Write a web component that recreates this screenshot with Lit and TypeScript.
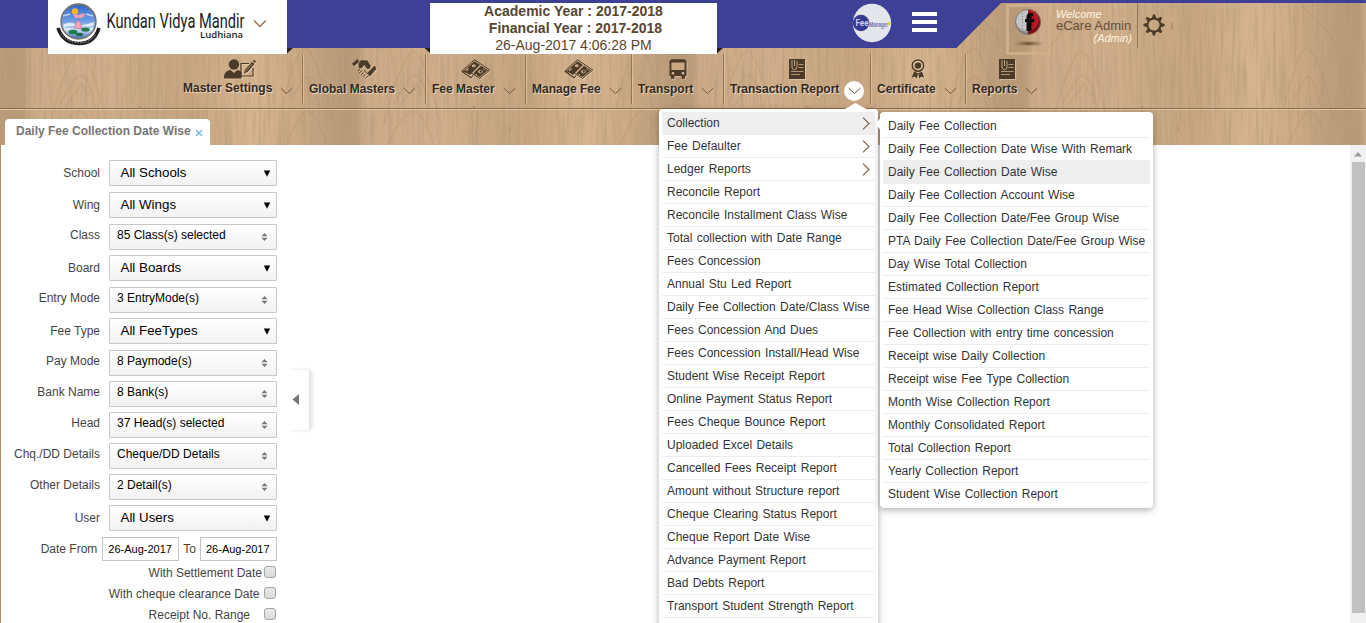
import { LitElement, html, css, svg, nothing } from "lit";
import { customElement, property } from "lit/decorators.js";
import { classMap } from "lit/directives/class-map.js";

const ink = "#4b3a28";

const icons: Record<string, unknown> = {
  user: svg`<svg width="32" height="20" viewBox="0 0 32 20">
    <circle cx="10" cy="5.5" r="5.2" fill=${ink}/>
    <path d="M0 19.5 C0 13 3 11.5 6.5 11 L10 14 L13.5 11 C16 11.5 17 12.5 17.5 14 V19.5Z" fill=${ink}/>
    <path d="M25 4.5H17V17H29V9" fill="none" stroke=${ink} stroke-width="1.2"/>
    <path d="M20 14.5 L21 11 L28 3 L30.5 5 L23.5 13Z M28.8 2 L30 0.8 L32 2.5 L31 4Z" fill=${ink}/>
    <path d="M21.5 12.5L28 5" stroke="#c9a681" stroke-width=".7"/></svg>`,
  hands: svg`<svg width="24" height="20" viewBox="0 0 24 20">
    <path d="M0 4.8 L5.4 0 L7.4 2.4 L2 7.2Z" fill=${ink}/>
    <path d="M6.5 4.5 L9 1.2 L15.5 1.4 L18.8 7 L17.4 10 L15 9.8 L12.3 6 L9.5 9.2 L7 9Z" fill=${ink}/>
    <path d="M6 12L8 10.300M7.200 14L9.800 11.800M9 16L11.500 13.500M11 17.600L13.200 15.500" stroke=${ink} stroke-width="1"/>
    <path d="M12 11 L16 15.2 L18 13.2" fill="none" stroke=${ink} stroke-width=".9"/>
    <path d="M16 13.800 L22.600 7 L24 10 L17.800 17Z M13 19.500L16.800 16.500" fill=${ink} stroke=${ink} stroke-width=".8"/></svg>`,
  money: svg`<svg width="30" height="20" viewBox="0 0 30 20">
    <path d="M.8 12.200 L13.500 .8 L28.800 11 L18.500 19.300 L10.800 14.500 Z" fill="none" stroke=${ink} stroke-width="1"/>
    <path d="M1 12.500 L10 18.800 L12 16.500" fill="none" stroke=${ink} stroke-width="1.100"/>
    <path d="M2.600 12 L13.500 2.300 L19 6 L9 16Z" fill=${ink}/>
    <path d="M12.200 14.500 L20 6.800 L27 11.200 L18.600 18Z" fill=${ink}/>
    <ellipse cx="12.800" cy="6.800" rx="2" ry="1.500" fill="#c9a681"/><path d="M5 11.800L7.500 9.600" stroke="#c9a681" stroke-width="1.300"/>
    <ellipse cx="19.500" cy="12.600" rx="2.500" ry="1.900" fill="#c9a681"/><ellipse cx="19.900" cy="12.500" rx="1.100" ry="1.200" fill=${ink}/>
    <path d="M14.800 14.800L16 16M22.500 9.800L24.500 11.200" stroke="#c9a681" stroke-width=".9"/></svg>`,
  bus: svg`<svg width="18" height="20" viewBox="0 0 18 20">
    <path d="M2.500 .2H15.500L17.500 2V17H.5V2Z" fill=${ink}/>
    <rect x="2.400" y="3.500" width="13.200" height="7.500" fill="#c9a681"/>
    <circle cx="4" cy="14.200" r="1.300" fill="#d9bd9b"/><circle cx="14" cy="14.200" r="1.300" fill="#d9bd9b"/>
    <path d="M2 17h3.400v2.800H2zM12.600 17H16v2.800h-3.400z" fill=${ink}/></svg>`,
  report: svg`<svg width="16" height="20" viewBox="0 0 16 20">
    <rect width="16" height="20" fill=${ink}/>
    <path d="M3 1V8A2.300 2.500 0 0 0 8 8V2M5.500 1V7" fill="none" stroke="#c0a07c" stroke-width="1"/>
    <path d="M9.500 5.500h5M9.500 8.500h5M2 12.500h12.500M2 15.500h9" stroke="#c0a07c" stroke-width=".9"/></svg>`,
  medal: svg`<svg width="14" height="20" viewBox="0 0 14 20">
    <circle cx="7" cy="6.600" r="5.700" fill="none" stroke=${ink} stroke-width="1.500"/><circle cx="7" cy="6.600" r="3.200" fill=${ink}/>
    <path d="M3 12.800 L7 14 L6 19.600 L3.800 17.800 L.8 18.500Z M11 12.800 L7.200 14 L8.200 19.600 L10.200 17.800 L13.200 18.500Z" fill=${ink}/></svg>`,
};

const chevronDown = html`<svg class="chev" width="13" height="8" viewBox="0 0 13 8"><path d="M.7 1L6.500 6.600L12.300 1" fill="none" stroke="#75593b" stroke-width="1"/></svg>`;

interface NavItem { label: string; icon: string; width: number; active?: boolean }
const nav: NavItem[] = [
  { label: "Master Settings", icon: "user", width: 126 },
  { label: "Global Masters", icon: "hands", width: 123 },
  { label: "Fee Master", icon: "money", width: 100 },
  { label: "Manage Fee", icon: "money", width: 106 },
  { label: "Transport", icon: "bus", width: 92 },
  { label: "Transaction Report", icon: "report", width: 147, active: true },
  { label: "Certificate", icon: "medal", width: 95 },
  { label: "Reports", icon: "report", width: 82 },
];

const reports = [
  "Collection", "Fee Defaulter", "Ledger Reports", "Reconcile Report", "Reconcile Installment Class Wise",
  "Total collection with Date Range", "Fees Concession", "Annual Stu Led Report", "Daily Fee Collection Date/Class Wise",
  "Fees Concession And Dues", "Fees Concession Install/Head Wise", "Student Wise Receipt Report",
  "Online Payment Status Report", "Fees Cheque Bounce Report", "Uploaded Excel Details", "Cancelled Fees Receipt Report",
  "Amount without Structure report", "Cheque Clearing Status Report", "Cheque Report Date Wise",
  "Advance Payment Report", "Bad Debts Report", "Transport Student Strength Report", "",
];
const collections = [
  "Daily Fee Collection", "Daily Fee Collection Date Wise With Remark", "Daily Fee Collection Date Wise",
  "Daily Fee Collection Account Wise", "Daily Fee Collection Date/Fee Group Wise", "PTA Daily Fee Collection Date/Fee Group Wise",
  "Day Wise Total Collection", "Estimated Collection Report", "Fee Head Wise Collection Class Range",
  "Fee Collection with entry time concession", "Receipt wise Daily Collection", "Receipt wise Fee Type Collection",
  "Month Wise Collection Report", "Monthly Consolidated Report", "Total Collection Report", "Yearly Collection Report",
  "Student Wise Collection Report",
];

type Field = [label: string, value: string, multi: boolean];
const fields: Field[] = [
  ["School", "All Schools", false], ["Wing", "All Wings", false], ["Class", "85 Class(s) selected", true],
  ["Board", "All Boards", false], ["Entry Mode", "3 EntryMode(s)", true], ["Fee Type", "All FeeTypes", false],
  ["Pay Mode", "8 Paymode(s)", true], ["Bank Name", "8 Bank(s)", true], ["Head", "37 Head(s) selected", true],
  ["Chq./DD Details", "Cheque/DD Details", true], ["Other Details", "2 Detail(s)", true], ["User", "All Users", false],
];

@customElement("wood-panel")
class WoodPanel extends LitElement {
  static styles = css`:host{display:block;width:100%;height:100%}svg{display:block}`;
  render() {
    return html`<svg width="1366" height="145">
      <defs>
        <linearGradient id="tone">
          <stop offset="0" stop-color="#b99a78"/><stop offset=".035" stop-color="#bb9c7a"/>
          <stop offset=".06" stop-color="#cdab88"/><stop offset=".3" stop-color="#d0ae8b"/>
          <stop offset=".42" stop-color="#c9a884"/><stop offset=".55" stop-color="#c8a682"/>
          <stop offset=".62" stop-color="#cfad89"/><stop offset=".72" stop-color="#d6b490"/>
          <stop offset=".86" stop-color="#cba985"/><stop offset=".94" stop-color="#bf9f7d"/>
          <stop offset="1" stop-color="#b99a78"/>
        </linearGradient>
        <pattern id="plank" x="12" width="334" height="145" patternUnits="userSpaceOnUse">
          <rect width="334" height="145" fill="url(#tone)"/>
          <g fill="none" stroke="#9b7852" stroke-opacity=".17" stroke-width="1.600">
            <path d="M38 124C46 92 58 55 66 52S86 82 94 124"/><path d="M48 104C57 88 65 72 71 76S80 92 83 108"/>
            <path d="M54 106L70 84L77 96"/><path d="M42 145C52 120 64 108 70 112S84 130 88 145"/>
            <path d="M270 108C278 70 288 46 294 48S310 76 320 120"/><path d="M280 100C286 86 293 72 297 78S303 92 307 106"/>
            <path d="M274 145C284 124 292 106 298 112S310 128 315 145"/><path d="M68 0C62 22 44 30 34 52M284 0C300 20 314 26 322 46"/>
          </g>
          <g fill="#8a6a48" fill-opacity=".35"><ellipse cx="128" cy="107" rx="1.600" ry="1"/><ellipse cx="158" cy="26" rx="1" ry="4"/><ellipse cx="164" cy="129" rx=".8" ry="3"/></g>
        </pattern>
        <filter id="grain" x="0" y="0" width="100%" height="100%">
          <feTurbulence type="fractalNoise" baseFrequency=".34 .018" numOctaves="3" seed="7"/>
          <feColorMatrix values="0 0 0 0 .42  0 0 0 0 .3  0 0 0 0 .17  1.200 0 0 0 -.5"/>
        </filter>
      </defs>
      <rect width="1366" height="145" fill="url(#plank)"/>
      <rect width="1366" height="145" filter="url(#grain)"/>
    </svg>`;
  }
}

@customElement("drop-menu")
class DropMenu extends LitElement {
  @property({ type: Array }) items: string[] = [];
  @property({ type: Number }) selected = 0;
  @property({ type: Number }) nested = 0;
  static styles = css`
    :host{display:block;box-sizing:border-box;background:#fff;padding:3px 3px 2px;border-radius:4px;box-shadow:0 2px 7px rgba(0,0,0,.32)}
    .item{height:23px;box-sizing:border-box;border-bottom:1px solid #ededed;padding:0 5px;display:flex;align-items:center;justify-content:space-between;
      font:12px/22px "Liberation Sans",Arial,sans-serif;word-spacing:1px;color:#333;white-space:nowrap}
    .item.on{background:#eee}
    .item:last-child{border-bottom-color:transparent}`;
  render() {
    return this.items.map((t, i) => html`<div class=${classMap({ item: true, on: i === this.selected })}><span>${t}</span>
      ${i < this.nested ? html`<svg width="8" height="13" viewBox="0 0 8 13"><path d="M1 .6L7 6.500L1 12.400" fill="none" stroke="#7b5f42" stroke-width="1.100"/></svg>` : nothing}</div>`);
  }
}

@customElement("app-root")
class AppRoot extends LitElement {
  static styles = css`
    :host{display:block;position:relative;width:1366px;height:623px;overflow:hidden;background:#fff;font:12px "Liberation Sans",Arial,sans-serif;color:#444}
    svg{display:block}
    .head{position:relative;height:145px}
    .wood{position:absolute;inset:0}
    .violet{position:absolute;left:0;top:0}
    .front{position:relative;display:flex;flex-direction:column;height:145px}
    .top{display:flex;height:54px;align-items:flex-start}
    .brand{margin-left:48px;width:239px;height:54px;background:#fff;display:flex}
    .brand svg{overflow:visible}
    .years{margin:3px 0 0 143px;width:287px;height:51px;background:#fff;color:#58462f;text-align:center;font-size:14px;line-height:17px}
    .years b{display:block}
    .years b + b{padding-left:4px}
    .fee{margin:3px 0 0 135px}
    .burger{margin:12px 0 0 20px;width:25px;height:20px;display:flex;flex-direction:column;justify-content:space-between}
    .burger i{height:4px;background:#fff}
    .avatar{margin:4px 0 0 69px;width:45px;height:51px}
    .who{margin:9px 0 0 5px;width:76px;line-height:12px;display:flex;flex-direction:column}
    .who em{font-size:11px;color:#fff4e2;line-height:11px}
    .who em:last-child{align-self:flex-end}
    .who span{font-size:13px;line-height:12px;color:#63503b;margin-bottom:1px;white-space:nowrap}
    .bar{width:1px;height:45px;margin:3px 0 0 5px;background:#957654}
    .gear{margin:14px 0 0 5px}
    .nav{display:flex;height:54px;padding-left:176px}
    .entry{box-sizing:border-box;height:50px;display:flex;flex-direction:column;border-left:1px solid #957654;box-shadow:inset 1px 0 #dcbd98;padding-left:6px}
    .entry:first-child{border-color:transparent;box-shadow:none}
    .ico{height:20px;margin:5px 0 2px -6px;display:flex;justify-content:center;filter:drop-shadow(1px 1px 0 rgba(255,240,215,.35))}
    .cap{display:flex;align-items:center;height:16px;font-weight:bold;color:#33291f;text-shadow:1px 1px 1px #f0dcc0;white-space:nowrap}
    .entry:first-child .cap span{position:relative;top:-1px}
    .chevbox{display:flex;margin:3px 0 0 8px}
    .active .chevbox{margin:4px 0 0 5px;width:20px;height:20px;border-radius:50%;background:#fff;align-items:center;justify-content:center;flex:none}
    .rule{height:1px;background:#8c7052;border-bottom:1px solid #e0c29e}
    .tab{margin:9px 0 0 5px;width:205px;height:26px;box-sizing:border-box;border-radius:4px 4px 0 0;background:#fff;display:flex;align-items:center;padding:0 0 2px 11px;font-weight:bold;color:#757575;gap:4px;white-space:nowrap}
    .tab svg{margin-top:3px}
    .body{display:flex;height:478px;border-left:1px solid #b08d66;box-sizing:border-box}
    .side{width:276px;padding-top:15px;box-sizing:border-box;flex:none}
    .row{display:flex;height:32px;justify-content:flex-end;align-items:flex-start;gap:9px;line-height:26px}
    .row.multi{height:31px;line-height:22px}
    .box{width:168px;height:26px;box-sizing:border-box;border:1px solid #c8c8c8;border-radius:1px;background:linear-gradient(#fff,#f2f2f2);
      display:flex;justify-content:space-between;align-items:center;padding:0 5px 0 10.500px;font-size:13.333px;line-height:24px;color:#000}
    .multi .box{padding:0 8px 0 7px;font-size:12px;line-height:20px;align-items:flex-start}
    .multi .box svg{margin-top:8px}
    .dates{display:flex;justify-content:flex-end;line-height:24px;height:26px}
    .date{width:77px;height:24px;box-sizing:border-box;border:1px solid #c4c4c4;background:#fff;font-size:11px;line-height:23px;padding-left:5px;color:#000;white-space:nowrap}
    .date.a{margin:0 4px 0 5px}.date.b{margin-left:4px}
    .check{display:flex;justify-content:flex-end;height:21px;line-height:20px}
    .check i{width:12px;height:12px;box-sizing:border-box;border:1px solid #a5a5a5;border-radius:3px;background:linear-gradient(#e9e9e9,#dadada);margin:3px 1px 0 2px}
    .check.mid i{margin-left:4.500px}.check.far i{margin-left:14px}
    .handle{margin:225px 0 0 11px;width:21px;height:60px;background:#fff;box-shadow:3px 0 4px rgba(0,0,0,.13);display:flex;align-items:center;padding:0 0 2px 4px;box-sizing:border-box}
    .scroll{margin-left:auto;width:16px;height:478px;background:#f1f1f1;display:flex;flex-direction:column;align-items:center}
    .scroll svg{margin:7px 0 5px}
    .thumb{width:13px;height:451px;background:#c1c1c1}
    .menu1{position:absolute;left:659px;top:109px;width:219px}
    .menu2{position:absolute;left:880px;top:112px;width:273px}
    .tip1{position:absolute;left:843px;top:102px}
    .tip2{position:absolute;left:875px;top:117px}
    text{font-family:"Liberation Sans Narrow","Roboto",sans-serif}
    .lud{font-family:"Open Sans",sans-serif;font-weight:600}`;

  brand() {
    return html`<svg width="239" height="54">
      <defs><linearGradient id="sky" x2="0" y2="1"><stop offset="0" stop-color="#2f63c9"/><stop offset=".5" stop-color="#6fa0e6"/><stop offset=".75" stop-color="#c8dcf6"/><stop offset="1" stop-color="#3b62b4"/></linearGradient></defs>
      <circle cx="30.500" cy="21.500" r="17.400" fill="url(#sky)" stroke="#77736f" stroke-width="1.600"/>
      <path d="M15 25q6-4 12-1t19-2l-1 4q-12 1-17 0t-12 1z" fill="#fff" opacity=".75"/><path d="M15 16l7-2M38 14l7 2M37 29h8M16 29h7" stroke="#fff" opacity=".65" stroke-width="1.500"/>
      <circle cx="27" cy="11.500" r="3.200" fill="#f2b52b"/>
      <path d="M25 14l5 1 6-2 1 3-4 2h-6z" fill="#ef9cb9"/><path d="M31.300 18q-3 5-2 9" fill="none" stroke="#cf5d7f"/>
      <path d="M26.500 28q0-5 4-8 4 4 3 9z" fill="#f3a5b8" stroke="#c65379" stroke-width=".5"/>
      <ellipse cx="25" cy="32" rx="4.500" ry="2.300" fill="#1c7c4c"/><ellipse cx="37.500" cy="29.600" rx="4.200" ry="2.200" fill="#1c7c4c"/><ellipse cx="31.500" cy="34.400" rx="3.500" ry="1.600" fill="#18693f"/>
      <path d="M10 28q5 15 20.500 15.500T51 28" fill="none" stroke="#23201e" stroke-width="3.600"/>
      <path d="M13 34q6 8 17.500 8.800T48 34" fill="none" stroke="#bdb9b3" stroke-width=".8" stroke-dasharray="1.500 1.200"/>
      <text x="58.500" y="27.500" font-size="20.500" fill="#1c1c1c" textLength="138" lengthAdjust="spacingAndGlyphs">Kundan Vidya Mandir</text>
      <text class="lud" x="152" y="38" font-size="9.500" fill="#1c1c1c" textLength="43">Ludhiana</text>
      <path d="M206 20.500L211.800 26.500L217.800 20.500" fill="none" stroke="#94704a" stroke-width="1.300"/>
    </svg>`;
  }

  render() {
    return html`
      <div class="head">
        <div class="wood"><wood-panel></wood-panel></div>
        <svg class="violet" width="1366" height="54">
          <path d="M0 0H1366V3H1001L956.500 48H0Z" fill="#3e4095"/>
          <path d="M287 48h6l-6 5.500zM424.500 48h6v5.500zM717 48h6l-6 5.500z" fill="#2b241d"/>
        </svg>
        <div class="front">
          <div class="top">
            <div class="brand">${this.brand()}</div>
            <div class="years"><b>Academic Year : 2017-2018</b><b>Financial Year : 2017-2018</b>26-Aug-2017 4:06:28 PM</div>
            <svg class="fee" width="40" height="40">
              <circle cx="20" cy="20" r="19.200" fill="#e3e6ea"/><circle cx="9" cy="20" r="8.200" fill="#373a91"/>
              <text x="3.500" y="23" font-size="9" font-weight="bold" fill="#cfd2ea" textLength="13" lengthAdjust="spacingAndGlyphs">Fee</text>
              <text x="17" y="23.500" font-size="7.500" font-weight="bold" fill="#7376b0" textLength="19" lengthAdjust="spacingAndGlyphs">Manager</text>
              <circle cx="37" cy="20.500" r="1.500" fill="#e9c33c"/>
            </svg>
            <div class="burger"><i></i><i></i><i></i></div>
            <svg class="avatar" width="45" height="51">
              <defs><radialGradient id="ball" cx=".45" cy=".4"><stop offset=".7" stop-color="#fff" stop-opacity="0"/><stop offset="1" stop-color="#000" stop-opacity=".3"/></radialGradient>
              <radialGradient id="shade"><stop offset="0" stop-color="#5c452d"/><stop offset="1" stop-color="#8a6a48" stop-opacity="0"/></radialGradient></defs>
              <rect x="1.500" y="1.500" width="42" height="48" fill="none" stroke="#cfae88" stroke-width="3"/>
              <ellipse cx="22.500" cy="39.500" rx="16" ry="3" fill="url(#shade)"/>
              <path d="M22 5.300A12.500 12.500 0 0 0 22 30.500Z" fill="#c4c4c4"/><path d="M22 5.300A12.500 12.500 0 0 1 22 30.500Z" fill="#b3101e"/>
              <circle cx="22" cy="18" r="12.500" fill="url(#ball)" stroke="#7d6c5c" stroke-width=".8"/>
              <path d="M16.500 9v18" stroke="#777" stroke-dasharray="1 2"/>
              <path d="M20.500 27V18H19v-3h1.500v-2q0-4 4-4H27v3h-1.500v3H28v3h-2.500v9z" fill="#0c0c0c"/>
            </svg>
            <div class="who"><em>Welcome</em><span>eCare Admin</span><em>(Admin)</em></div>
            <div class="bar"></div>
            <svg class="gear" width="22" height="22" viewBox="-11 -11 22 22">
              <circle r="6.500" fill="none" stroke="#4b3a28" stroke-width="1.900"/>
              ${[0, 45, 90, 135, 180, 225, 270, 315].map((a) => svg`<path d="M-2.200 -6.800L-1 -10.600H1L2.200 -6.800Z" fill="#4b3a28" transform=${`rotate(${a})`}/>`)}
            </svg>
          </div>
          <div class="nav">${nav.map((n) => html`
            <div class=${classMap({ entry: true, active: !!n.active })} style="width:${n.width}px">
              <div class="ico">${icons[n.icon]}</div>
              <div class="cap"><span>${n.label}</span><div class="chevbox">${chevronDown}</div></div>
            </div>`)}</div>
          <div class="rule"></div>
          <div class="tab">Daily Fee Collection Date Wise
            <svg width="8" height="8" viewBox="0 0 8 8"><path d="M1 1L7 7M7 1L1 7" stroke="#6cb6e8" stroke-width="1.300"/></svg>
          </div>
        </div>
      </div>
      <div class="body">
        <div class="side">
          ${fields.map(([l, v, m]) => html`<div class=${classMap({ row: true, multi: m })}><span>${l}</span><div class="box"><span>${v}</span>
            ${m ? html`<svg width="7" height="8" viewBox="0 0 7 8"><path d="M3.500 0L6.500 3.200H.5ZM3.500 8L6.500 4.800H.5Z" fill="#777"/></svg>`
              : html`<svg width="8" height="7" viewBox="0 0 8 7"><path d="M.8 .5H7.200L4 6.800Z" fill="#000"/></svg>`}</div></div>`)}
          <div class="dates"><span>Date From</span><div class="date a">26-Aug-2017</div><span>To</span><div class="date b">26-Aug-2017</div></div>
          <div class="check"><span>With Settlement Date</span><i></i></div>
          <div class="check mid"><span>With cheque clearance Date</span><i></i></div>
          <div class="check far"><span>Receipt No. Range</span><i></i></div>
        </div>
        <div class="handle"><svg width="7" height="11"><path d="M7 0V11L.5 5.500Z" fill="#777"/></svg></div>
        <div class="scroll"><svg width="8" height="5"><path d="M4 0L8 4.500H0Z" fill="#999"/></svg><div class="thumb"></div></div>
      </div>
      <drop-menu class="menu1" .items=${reports} .selected=${0} .nested=${3}></drop-menu>
      <svg class="tip1" width="25" height="9"><path d="M0 8L12.500 1L25 8V9H0Z" fill="#fff"/></svg>
      <drop-menu class="menu2" .items=${collections} .selected=${2}></drop-menu>
      <svg class="tip2" width="6" height="14"><path d="M6 0L1 7L6 14Z" fill="#fff"/></svg>`;
  }
}
